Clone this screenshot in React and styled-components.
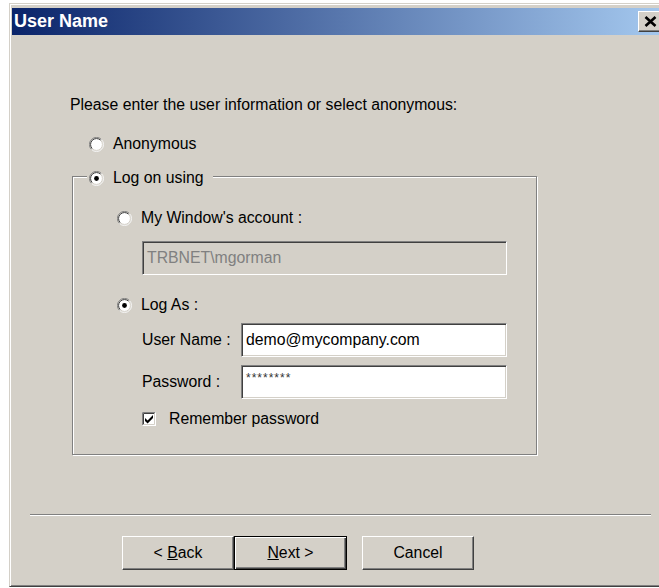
import React from 'react';
import styled, { createGlobalStyle } from 'styled-components';

const GlobalStyle = createGlobalStyle`
  html, body {
    margin: 0;
    padding: 0;
    background: #fff;
    overflow: hidden;
  }
  body {
    font-family: "Liberation Sans", Arial, sans-serif;
    font-size: 15.8px;
    color: #000;
  }
`;

const FACE = '#d4d0c8';
const SHADOW = '#808080';
const DARK = '#404040';

// dialog frame
const Window = styled.div`
  margin: 3px 0 0 9px;
  width: 664px;
  height: 584px;
  box-sizing: border-box;
  padding: 4px 3px 0 2px;
  background: ${FACE};
  border-top: 1px solid ${FACE};
  border-left: 1px solid ${FACE};
  border-bottom: 1px solid ${DARK};
  box-shadow: inset 1px 1px 0 #fff, inset 0 -1px 0 ${SHADOW};
  display: flex;
  flex-direction: column;
`;

const TitleBar = styled.div`
  height: 27px;
  display: flex;
  align-items: center;
  justify-content: space-between;
  padding: 0 0 0 2px;
  background: linear-gradient(to right, #0a246a, #a6caf0);
`;

const Title = styled.span`
  color: #fff;
  font-weight: bold;
  font-size: 18px;
`;

const CloseButton = styled.div`
  width: 25px;
  height: 21px;
  margin-right: 7px;
  box-sizing: border-box;
  background: ${FACE};
  border-top: 1px solid #fff;
  border-left: 1px solid #fff;
  border-right: 1px solid ${DARK};
  border-bottom: 1px solid ${DARK};
  box-shadow: inset -1px -1px 0 ${SHADOW};
  display: flex;
  align-items: center;
  justify-content: center;
`;

const Body = styled.div`
  display: flex;
  flex-direction: column;
  padding: 61px 0 0 58px;
`;

const Intro = styled.div`
  height: 18px;
  line-height: 18px;
  white-space: nowrap;
`;

const OptionRow = styled.label`
  display: flex;
  align-items: center;
  gap: ${(p) => p.$gap || 9}px;
  height: 18px;
  margin: ${(p) => p.$top || 0}px 0 0 ${(p) => p.$indent || 0}px;
  white-space: nowrap;
`;

const GroupBox = styled.div`
  margin: 23px 0 0 2px;
  width: 465px;
  height: 279px;
  box-sizing: border-box;
  border: 1px solid ${SHADOW};
  box-shadow: inset 1px 1px 0 #fff, 1px 1px 0 #fff;
  display: flex;
  flex-direction: column;
`;

const Legend = styled(OptionRow)`
  align-self: flex-start;
  margin: -8px 0 0 14px;
  padding: 0 10px 0 2px;
  background: ${FACE};
`;

const Field = styled.div`
  box-sizing: border-box;
  width: ${(p) => p.$width}px;
  height: 34px;
  padding-left: 4px;
  padding-top: ${(p) => (p.$secret ? 6 : 0)}px;
  border-top: 1px solid ${SHADOW};
  border-left: 1px solid ${SHADOW};
  border-right: 1px solid #fff;
  border-bottom: 1px solid #fff;
  box-shadow: inset 1px 1px 0 ${DARK}, inset -1px -1px 0 ${FACE};
  background: ${(p) => (p.$disabled ? FACE : '#fff')};
  color: ${(p) => (p.$disabled ? SHADOW : '#000')};
  display: flex;
  align-items: ${(p) => (p.$secret ? 'flex-start' : 'center')};
  white-space: nowrap;
`;

const Secret = styled.span`
  font-size: 12px;
  line-height: 12px;
  letter-spacing: 1px;
  color: #333;
`;

const FieldRow = styled.div`
  display: flex;
  align-items: center;
  margin: ${(p) => p.$top}px 0 0 69px;
`;

const FieldLabel = styled.span`
  width: 99px;
  white-space: nowrap;
`;

const Separator = styled.div`
  margin: 59px 0 0 -40px;
  width: 621px;
  height: 1px;
  background: ${SHADOW};
  box-shadow: 0 1px 0 #fff;
`;

const ButtonBar = styled.div`
  display: flex;
  margin: 21px 0 0 52px;
`;

const Button = styled.div`
  box-sizing: border-box;
  width: ${(p) => p.$width || 112}px;
  height: 34px;
  margin-left: ${(p) => p.$gap || 0}px;
  display: flex;
  align-items: center;
  justify-content: center;
  background: ${FACE};
  border: 1px solid;
  border-color: ${(p) => (p.$default ? '#000' : `#fff ${DARK} ${DARK} #fff`)};
  box-shadow: ${(p) =>
    p.$default
      ? `inset 1px 1px 0 #fff, inset -1px -1px 0 ${DARK}, inset -2px -2px 0 ${SHADOW}`
      : `inset -1px -1px 0 ${SHADOW}`};
  white-space: nowrap;
`;

function Radio({ checked }) {
  return (
    <svg width="15" height="15" viewBox="0 0 15 15">
      <circle cx="7.5" cy="7.5" r="6.5" fill="#fff" />
      <path d="M2.5 12.5 A7 7 0 0 1 12.5 2.5" fill="none" stroke={SHADOW} />
      <path d="M12.5 2.5 A7 7 0 0 1 2.5 12.5" fill="none" stroke="#f4f4f4" />
      <path d="M3.3 11.7 A5.9 5.9 0 0 1 11.7 3.3" fill="none" stroke={DARK} />
      <path d="M11.7 3.3 A5.9 5.9 0 0 1 3.3 11.7" fill="none" stroke={FACE} />
      {checked && <circle cx="7.5" cy="7.5" r="2.4" fill="#000" />}
    </svg>
  );
}

function Checkbox({ checked }) {
  return (
    <svg width="14" height="14" viewBox="0 0 14 14">
      <rect x="0" y="0" width="14" height="14" fill="#fff" />
      <path d="M0.5 13.5 V0.5 H13.5" fill="none" stroke={SHADOW} />
      <path d="M1.5 12.5 V1.5 H12.5" fill="none" stroke={DARK} />
      <path d="M0.5 13.5 H13.5 V0.5" fill="none" stroke="#fff" />
      <path d="M1.5 12.5 H12.5 V1.5" fill="none" stroke={FACE} />
      {checked && (
        <path d="M3 6 L5.6 8.4 L11 3 V6 L5.6 11.4 L3 9 Z" fill="#000" />
      )}
    </svg>
  );
}

export default function App() {
  return (
    <>
      <GlobalStyle />
      <Window>
        <TitleBar>
          <Title>User Name</Title>
          <CloseButton>
            <svg width="13" height="11" viewBox="0 0 13 11">
              <path d="M1.5 1 L11.5 10 M11.5 1 L1.5 10" stroke="#000" strokeWidth="2.6" />
            </svg>
          </CloseButton>
        </TitleBar>
        <Body>
          <Intro>Please enter the user information or select anonymous:</Intro>
          <OptionRow $top={21} $indent={19}>
            <Radio />
            Anonymous
          </OptionRow>
          <GroupBox>
            <Legend>
              <Radio checked />
              Log on using
            </Legend>
            <OptionRow $top={22} $indent={44}>
              <Radio />
              My Window's account :
            </OptionRow>
            <FieldRow $top={14}>
              <Field $width={365} $disabled>
                {'TRBNET\\mgorman'}
              </Field>
            </FieldRow>
            <OptionRow $top={21} $indent={44}>
              <Radio checked />
              Log As :
            </OptionRow>
            <FieldRow $top={9}>
              <FieldLabel>User Name :</FieldLabel>
              <Field $width={266}>demo@mycompany.com</Field>
            </FieldRow>
            <FieldRow $top={8}>
              <FieldLabel>Password :</FieldLabel>
              <Field $width={266} $secret>
                <Secret>********</Secret>
              </Field>
            </FieldRow>
            <OptionRow $top={11} $indent={69} $gap={13}>
              <Checkbox checked />
              Remember password
            </OptionRow>
          </GroupBox>
          <Separator />
          <ButtonBar>
            <Button>
              &lt;&nbsp;<u>B</u>ack
            </Button>
            <Button $default $width={113}>
              <u>N</u>ext &gt;
            </Button>
            <Button $gap={15}>Cancel</Button>
          </ButtonBar>
        </Body>
      </Window>
    </>
  );
}
